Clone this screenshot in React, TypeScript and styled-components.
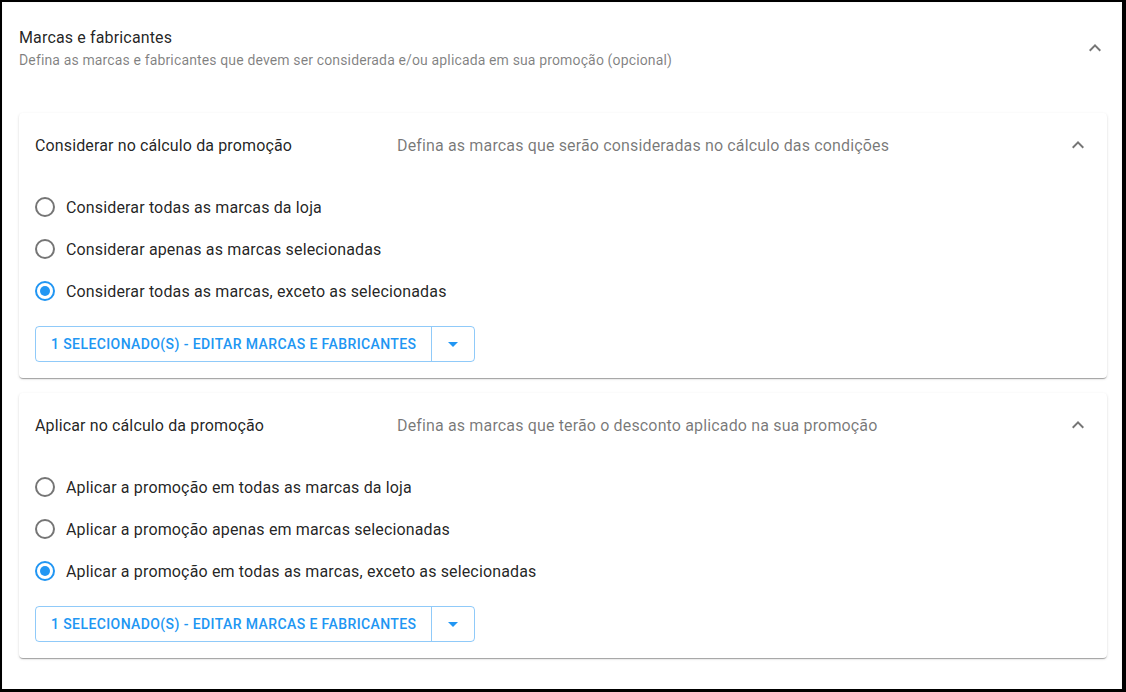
import React from "react";
import styled, { createGlobalStyle } from "styled-components";

const Global = createGlobalStyle`
  html, body { margin: 0; padding: 0; background: #fff; }
  body { font-family: Roboto, "Liberation Sans", Arial, sans-serif; -webkit-font-smoothing: antialiased; }
  * { box-sizing: border-box; }
`;

const Frame = styled.div`
  width: 1126px;
  height: 692px;
  border-style: solid;
  border-color: #000;
  border-width: 2px 4px 3px 2px;
  background: #fff;
  overflow: hidden;
`;

const Paper = styled.section`
  margin: 1px 1px 0 1px;
  height: 720px;
  background: #fff;
  border-radius: 4px;
  box-shadow: 0 0 2px rgba(0, 0, 0, 0.08);
`;

const SectionHeader = styled.header`
  display: flex;
  align-items: center;
  padding: 23px 14px 0 16px;
`;

const HeaderText = styled.div`
  flex: 1;
  display: flex;
  flex-direction: column;
`;

const Title = styled.div`
  font-size: 16px;
  line-height: 24px;
  letter-spacing: 0.15px;
  color: rgba(0, 0, 0, 0.87);
`;

const Subtitle = styled.div`
  font-size: 14px;
  line-height: 20px;
  letter-spacing: 0.14px;
  color: rgba(0, 0, 0, 0.5);
`;

const Cards = styled.div`
  display: flex;
  flex-direction: column;
  gap: 15px;
  padding: 43px 14px 0 16px;
`;

const Card = styled.div`
  background: #fff;
  border-radius: 4px;
  box-shadow: 0 2px 1px -1px rgba(0, 0, 0, 0.2), 0 1px 1px 0 rgba(0, 0, 0, 0.14),
    0 1px 3px 0 rgba(0, 0, 0, 0.12);
`;

const CardHeader = styled.div`
  height: 64px;
  display: flex;
  align-items: center;
  padding: 0 17px 0 16px;
`;

const Heading = styled.div`
  width: 362px;
  flex-shrink: 0;
  font-size: 16px;
  letter-spacing: 0.13px;
  color: rgba(0, 0, 0, 0.87);
`;

const SecondaryHeading = styled.div`
  flex: 1;
  font-size: 16px;
  letter-spacing: 0.15px;
  color: rgba(0, 0, 0, 0.54);
`;

const IconBox = styled.span`
  width: 24px;
  height: 24px;
  display: flex;
  color: rgba(0, 0, 0, 0.54);
  svg { width: 24px; height: 24px; fill: currentColor; }
`;

const Details = styled.div`
  padding: 9px 16px 16px 16px;
  display: flex;
  flex-direction: column;
  align-items: flex-start;
`;

const RadioRow = styled.label`
  height: 42px;
  display: flex;
  align-items: center;
  gap: 11px;
  cursor: pointer;
`;

const RadioCircle = styled.span<{ $checked: boolean }>`
  width: 20px;
  height: 20px;
  border-radius: 50%;
  border: 2px solid ${(p) => (p.$checked ? "#2196f3" : "rgba(0,0,0,0.54)")};
  display: flex;
  align-items: center;
  justify-content: center;
  &::after {
    content: "";
    width: 10px;
    height: 10px;
    border-radius: 50%;
    background: #2196f3;
    display: ${(p) => (p.$checked ? "block" : "none")};
  }
`;

const RadioLabel = styled.span`
  font-size: 16px;
  letter-spacing: 0.15px;
  color: rgba(0, 0, 0, 0.87);
`;

const ButtonGroup = styled.div`
  margin-top: 14px;
  display: flex;
  height: 36px;
  border: 1px solid rgba(33, 150, 243, 0.5);
  border-radius: 4px;
`;

const MainButton = styled.button`
  font-family: inherit;
  background: transparent;
  border: none;
  border-right: 1px solid rgba(33, 150, 243, 0.5);
  padding: 0 15px;
  font-size: 14px;
  font-weight: 500;
  letter-spacing: 0.4px;
  text-transform: uppercase;
  color: #2196f3;
  cursor: pointer;
`;

const DropButton = styled.button`
  width: 42px;
  background: transparent;
  border: none;
  display: flex;
  align-items: center;
  justify-content: center;
  color: #2196f3;
  cursor: pointer;
  svg { width: 24px; height: 24px; fill: currentColor; }
`;

const ExpandLess = () => (
  <svg viewBox="0 0 24 24">
    <path d="M12 8l-6 6 1.41 1.41L12 10.83l4.59 4.58L18 14z" />
  </svg>
);

const ArrowDropDown = () => (
  <svg viewBox="0 0 24 24">
    <path d="M7 10l5 5 5-5z" />
  </svg>
);

type Group = {
  heading: string;
  secondary: string;
  options: string[];
  selected: number;
};

const groups: Group[] = [
  {
    heading: "Considerar no cálculo da promoção",
    secondary: "Defina as marcas que serão consideradas no cálculo das condições",
    options: [
      "Considerar todas as marcas da loja",
      "Considerar apenas as marcas selecionadas",
      "Considerar todas as marcas, exceto as selecionadas",
    ],
    selected: 2,
  },
  {
    heading: "Aplicar no cálculo da promoção",
    secondary: "Defina as marcas que terão o desconto aplicado na sua promoção",
    options: [
      "Aplicar a promoção em todas as marcas da loja",
      "Aplicar a promoção apenas em marcas selecionadas",
      "Aplicar a promoção em todas as marcas, exceto as selecionadas",
    ],
    selected: 2,
  },
];

export default function App() {
  return (
    <>
      <Global />
      <Frame>
        <Paper>
          <SectionHeader>
            <HeaderText>
              <Title>Marcas e fabricantes</Title>
              <Subtitle>
                Defina as marcas e fabricantes que devem ser considerada e/ou aplicada em sua promoção (opcional)
              </Subtitle>
            </HeaderText>
            <IconBox>
              <ExpandLess />
            </IconBox>
          </SectionHeader>
          <Cards>
            {groups.map((g) => (
              <Card key={g.heading}>
                <CardHeader>
                  <Heading>{g.heading}</Heading>
                  <SecondaryHeading>{g.secondary}</SecondaryHeading>
                  <IconBox>
                    <ExpandLess />
                  </IconBox>
                </CardHeader>
                <Details>
                  {g.options.map((o, i) => (
                    <RadioRow key={o}>
                      <RadioCircle $checked={i === g.selected} />
                      <RadioLabel>{o}</RadioLabel>
                    </RadioRow>
                  ))}
                  <ButtonGroup>
                    <MainButton>1 selecionado(s) - editar marcas e fabricantes</MainButton>
                    <DropButton>
                      <ArrowDropDown />
                    </DropButton>
                  </ButtonGroup>
                </Details>
              </Card>
            ))}
          </Cards>
        </Paper>
      </Frame>
    </>
  );
}
